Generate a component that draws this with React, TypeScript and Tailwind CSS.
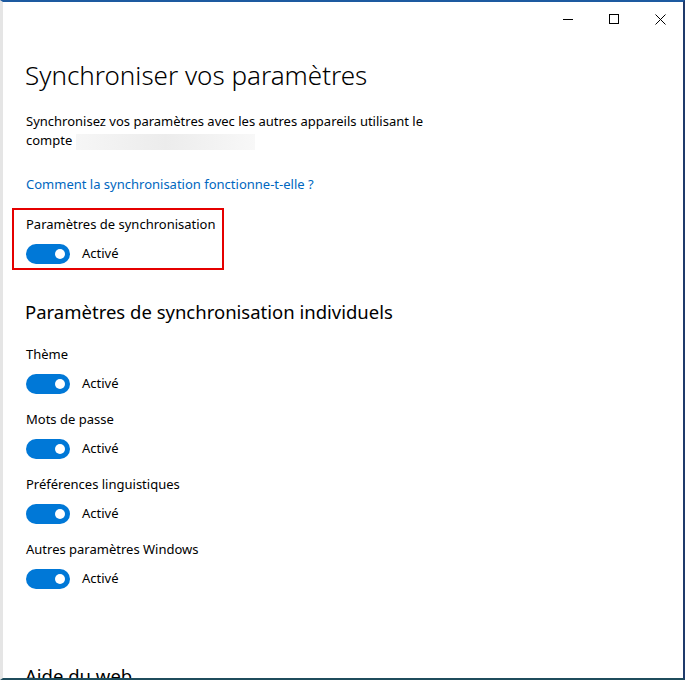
const font = { fontFamily: '"Noto Sans", "Open Sans", sans-serif' }

function Toggle() {
    return <div className="flex items-center gap-3">
        <div className="w-[44px] h-[20px] rounded-full bg-[#0078d7] flex items-center justify-end pr-[5px]">
            <div className="w-[10px] h-[10px] rounded-full bg-white" />
        </div>
        <span className="text-[13px] text-black">Activé</span>
    </div>
}

function Setting({ label }: { label: string }) {
    return <div className="flex flex-col gap-[10px] h-[65px]">
        <div className="text-[13px] text-black leading-[20px]">{label}</div>
        <Toggle />
    </div>
}

export default function App() {
    return <div style={font} className="w-[685px] h-[680px] bg-white overflow-hidden flex flex-col border-t-2 border-t-[#1d5aa0] border-l-[3px] border-l-[#e5e5e5] border-r-2 border-r-[#1f3a6b] border-b-2 border-b-[#1f4c5c]">
        {/* title bar */}
        <div className="h-[34px] flex justify-end items-center shrink-0">
            <div className="w-[46px] h-full flex items-center justify-center">
                <div className="w-[10px] h-px bg-black" />
            </div>
            <div className="w-[46px] h-full flex items-center justify-center">
                <div className="w-[10px] h-[10px] border border-black" />
            </div>
            <div className="w-[46px] h-full flex items-center justify-center">
                <svg width="11" height="11" viewBox="0 0 11 11">
                    <path d="M0.5 0.5L10.5 10.5M10.5 0.5L0.5 10.5" stroke="black" strokeWidth="1" />
                </svg>
            </div>
        </div>

        <div className="pl-[23px] flex flex-col">
            <h1 className="text-[26px] font-light text-black leading-[40px] mt-[19px] -ml-[1px]">Synchroniser vos paramètres</h1>

            <p className="text-[13px] text-black leading-[19px] w-[420px] mt-[17px]">
                Synchronisez vos paramètres avec les autres appareils utilisant le compte <span className="inline-block align-middle w-[179px] h-[16px] bg-gradient-to-r from-[#f6f6f6] via-[#ececec] to-[#f8f8f8]" />
            </p>

            <a className="text-[13px] text-[#0067c0] leading-[20px] mt-[24px]">Comment la synchronisation fonctionne-t-elle ?</a>

            <div className="-ml-[14px] mt-[14px] w-[212px] h-[62px] border-2 border-[#e50000] pl-[12px] pt-[4px] flex flex-col gap-[10px] whitespace-nowrap">
                <div className="text-[13px] text-black leading-[20px]">Paramètres de synchronisation</div>
                <Toggle />
            </div>

            <h2 className="text-[18.5px] text-black leading-[28px] mt-[28px] -ml-[1px]">Paramètres de synchronisation individuels</h2>

            <div className="flex flex-col mt-[18px]">
                <Setting label="Thème" />
                <Setting label="Mots de passe" />
                <Setting label="Préférences linguistiques" />
                <Setting label="Autres paramètres Windows" />
            </div>

            <h2 className="text-[18.5px] text-black leading-[28px] mt-[58px] -ml-[1px]">Aide du web</h2>
        </div>
    </div>
}
